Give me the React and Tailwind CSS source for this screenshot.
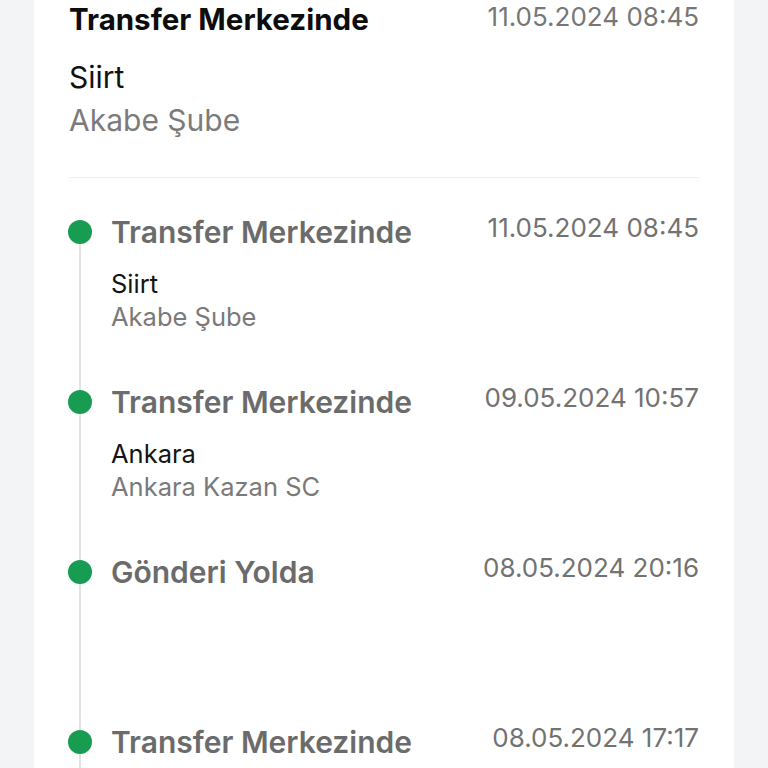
import React from "react";

const events = [
  { title: "Transfer Merkezinde", date: "11.05.2024 08:45", city: "Siirt", branch: "Akabe Şube" },
  { title: "Transfer Merkezinde", date: "09.05.2024 10:57", city: "Ankara", branch: "Ankara Kazan SC" },
  { title: "Gönderi Yolda", date: "08.05.2024 20:16" },
  { title: "Transfer Merkezinde", date: "08.05.2024 17:17", city: "Ankara", branch: "Ankara Kazan SC" },
];

function TimelineItem({ item, first }) {
  return (
    <div className="flex h-[170px]">
      {/* rail */}
      <div className="flex w-[24px] flex-col items-center">
        <div className={`h-[6px] w-[2px] ${first ? "bg-transparent" : "bg-[#e3e3e3]"}`} />
        <div className="h-[24px] w-[24px] rounded-full bg-[#179c52]" />
        <div className="w-[2px] flex-1 bg-[#e3e3e3]" />
      </div>

      <div className="ml-[19px] flex-1">
        <div className="flex items-start justify-between">
          <h3 className="text-[30px] font-semibold leading-[36px] text-[#6b6b6b]">
            {item.title}
          </h3>
          <span className="text-[26px] leading-[28px] text-[#727272]">{item.date}</span>
        </div>
        {item.city && (
          <div className="mt-[17px]">
            <p className="text-[25.5px] leading-[33px] text-[#141414]">{item.city}</p>
            <p className="text-[25.5px] leading-[33px] text-[#7a7a7a]">{item.branch}</p>
          </div>
        )}
      </div>
    </div>
  );
}

export default function App() {
  return (
    <div className="h-[768px] overflow-hidden bg-[#f3f4f6] px-[34px]">
      <div
        className="h-full bg-white px-[35px]"
        style={{ fontFamily: "Inter, 'Noto Sans', sans-serif" }}
      >
        {/* latest status */}
        <div>
          <div className="flex items-start justify-between">
            <h2 className="text-[29.5px] font-bold leading-[38px] text-[#0d0d0d]">
              Transfer Merkezinde
            </h2>
            <span className="text-[26px] leading-[34px] text-[#777777]">11.05.2024 08:45</span>
          </div>
          <p className="mt-[21px] text-[30px] leading-[36px] text-[#111111]">Siirt</p>
          <p className="mt-[7px] text-[30px] leading-[36px] text-[#7b7b7b]">Akabe Şube</p>
        </div>

        <div className="mt-[39px] h-px bg-[#f0f0f0]" />

        {/* history */}
        <div className="ml-[-1px] mt-[36px]">
          {events.map((item, i) => (
            <TimelineItem key={i} item={item} first={i === 0} />
          ))}
        </div>
      </div>
    </div>
  );
}
